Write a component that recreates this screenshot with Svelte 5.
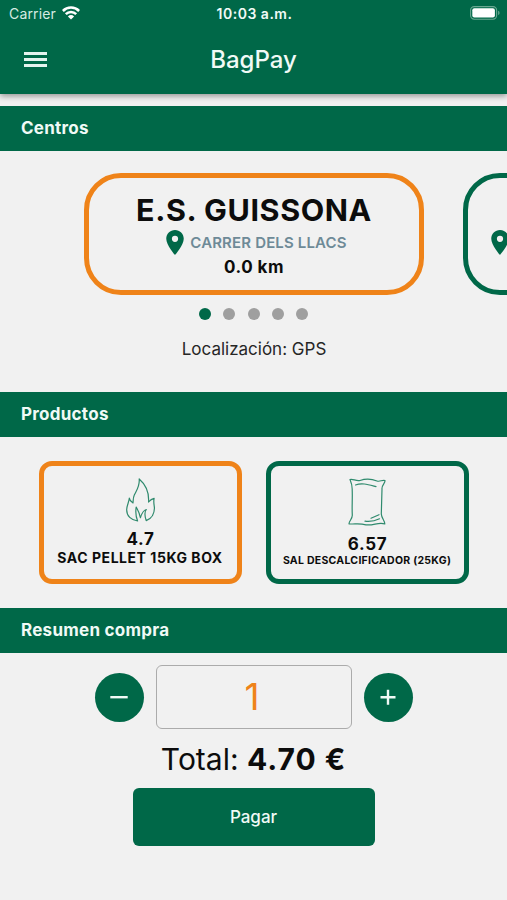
<script lang="ts">
  interface Product {
    price: string;
    name: string;
    icon: 'flame' | 'bag';
  }

  const products: Product[] = [
    { price: '4.7', name: 'SAC PELLET 15KG BOX', icon: 'flame' },
    { price: '6.57', name: 'SAL DESCALCIFICADOR (25KG)', icon: 'bag' }
  ];

  let selectedProduct = $state(0);
  let slide = $state(0);
  let quantity = $state(1);

  let total = $derived((Number(products[selectedProduct].price) * quantity).toFixed(2));
</script>

{#snippet pin()}
  <svg class="pin" viewBox="5 2 14 20" aria-hidden="true">
    <path
      d="M12 2C8.13 2 5 5.13 5 9c0 5.25 7 13 7 13s7-7.75 7-13c0-3.87-3.13-7-7-7zm0 9.5a2.5 2.5 0 1 1 0-5 2.5 2.5 0 0 1 0 5z"
    />
  </svg>
{/snippet}

<div class="app">
  <header>
    <div class="status">
      <div class="carrier">
        <span>Carrier</span>
        <svg class="wifi" viewBox="0 0 18 14" aria-hidden="true">
          <path d="M.9 5a11.4 11.4 0 0 1 16.2 0" />
          <path d="M3.8 8.1a7.3 7.3 0 0 1 10.4 0" />
          <path class="wedge" d="M5.9 10.5a4.5 4.5 0 0 1 6.2 0L9 13.6z" />
        </svg>
      </div>
      <span class="time">10:03 a.m.</span>
      <svg class="battery" viewBox="0 0 30 14" aria-hidden="true">
        <rect class="shell" x="0.6" y="0.6" width="26" height="12.6" rx="3.6" />
        <rect class="charge" x="2.3" y="2.3" width="22.6" height="9.2" rx="2" />
        <path class="tip" d="M28.1 4.7c1.9.6 1.9 3.8 0 4.4z" />
      </svg>
    </div>
    <div class="toolbar">
      <button class="menu" aria-label="Menú">
        <i></i>
        <i></i>
        <i></i>
      </button>
      <h1>BagPay</h1>
    </div>
  </header>

  <h2>Centros</h2>
  <section class="centers">
    <div class="carousel">
      <article class="center selected">
        <h3>E.S. GUISSONA</h3>
        <div class="street">
          {@render pin()}
          <span>CARRER DELS LLACS</span>
        </div>
        <p class="distance">0.0 km</p>
      </article>
      <article class="center next">
        {@render pin()}
      </article>
    </div>
    <div class="dots">
      {#each Array(5) as _, i}
        <button
          class="dot"
          class:active={slide === i}
          aria-label="Centro {i + 1}"
          onclick={() => (slide = i)}
        ></button>
      {/each}
    </div>
    <p class="location">Localización: GPS</p>
  </section>

  <h2>Productos</h2>
  <section class="products">
    {#each products as product, i}
      <button
        class="product {product.icon}"
        class:selected={selectedProduct === i}
        onclick={() => (selectedProduct = i)}
      >
        {#if product.icon === 'flame'}
          <svg class="art" viewBox="0 0 30 44" aria-hidden="true">
            <path
              d="M14.2 1C14.9 8 11.8 12 9.3 17C8.1 19.5 8.3 22 8 25C6.3 24 4.6 22.5 4.3 20.2C4 24 1.9 27 1.7 31.5C1.5 38 6.3 42.3 12.6 43C11 39 10.4 34 11.2 29C12.4 31.5 14.4 34 15.4 39.7C16.4 36.5 17.6 32.5 21.3 31.5C19.3 34 20 39 21.2 42.6C26.9 40.5 29.6 35 29.4 29.5C29.1 26.5 28.3 24 29.1 20.3C27.1 20.7 25.2 22 23.6 24C24.1 15 21.2 7 14.2 1Z"
            />
          </svg>
        {:else}
          <svg class="art" viewBox="0 0 38 48" aria-hidden="true">
            <path
              d="M2 1.5C5 .5 8 3.5 12 2.5C18 .3 23 .5 29 3C32 4.2 34 1.5 37 2.5C37.5 5 33.5 7 34 11L33.3 36C33.5 40 37 43 36.8 46C31 43.5 25 48 18 46.8C11 45 6 46.5 1 45.8C1 43 4.5 41 4.3 37C3.8 29 4.6 20 4.2 12C4.4 8 3.5 5 2 1.5Z"
            />
            <path d="M7.5 7C14 4.5 20 6.5 28 8.6M23 40.2L31 36.7M17 43.2C22 43.8 27 43 31.5 40.8" />
          </svg>
        {/if}
        <span class="price">{product.price}</span>
        <span class="name">{product.name}</span>
      </button>
    {/each}
  </section>

  <h2>Resumen compra</h2>
  <section class="summary">
    <div class="stepper">
      <button class="round" aria-label="Menos" onclick={() => (quantity = Math.max(1, quantity - 1))}>
        <svg viewBox="0 0 18 18" aria-hidden="true"><path d="M.3 9.2h17.4" /></svg>
      </button>
      <div class="quantity">{quantity}</div>
      <button class="round" aria-label="Más" onclick={() => (quantity += 1)}>
        <svg viewBox="0 0 18 18" aria-hidden="true"><path d="M1.5 9.2h15M9 1.7v15" /></svg>
      </button>
    </div>
    <p class="total">Total: <b>{total} €</b></p>
    <button class="pay">Pagar</button>
  </section>
</div>

<style>
  :global(body) {
    margin: 0;
    background: #f1f1f1;
  }

  .app {
    --green: #006848;
    --orange: #ef8319;
    width: 100%;
    height: 900px;
    overflow: hidden;
    background: #f1f1f1;
    color: #0c0c0c;
    font-family: Inter, Roboto, sans-serif;
    white-space: nowrap;
  }

  h1,
  h2,
  h3,
  p {
    margin: 0;
  }

  button {
    padding: 0;
    border: 0;
    background: none;
    color: inherit;
    font: inherit;
    letter-spacing: inherit;
  }

  header {
    height: 94px;
    margin-bottom: 12px;
    background: var(--green);
    box-shadow: 0 2px 6px rgba(0, 0, 0, 0.4);
    color: #f0faf6;
  }

  .status {
    display: grid;
    grid-template-columns: 1fr auto 1fr;
    align-items: center;
    height: 27px;
    padding: 0 7px 0 9px;
    font-size: 14px;
  }

  .carrier {
    display: flex;
    align-items: center;
    gap: 6px;
    color: #d6ebe2;
    letter-spacing: 0.15px;
  }

  .wifi {
    width: 18px;
    height: 14px;
    margin-top: -1px;
    fill: none;
    stroke: #fff;
    stroke-width: 2.5;
  }

  .wifi .wedge {
    fill: #fff;
    stroke: none;
  }

  .time {
    font-weight: 600;
    letter-spacing: 0.5px;
  }

  .battery {
    justify-self: end;
    width: 30px;
    height: 14px;
    margin-top: -1px;
  }

  .shell {
    fill: none;
    stroke: #69a891;
    stroke-width: 1.1;
  }

  .charge {
    fill: #fff;
  }

  .tip {
    fill: #69a891;
  }

  .toolbar {
    display: grid;
    grid-template-columns: 1fr auto 1fr;
    align-items: center;
    height: 65px;
    padding: 0 24px;
  }

  .menu {
    display: flex;
    flex-direction: column;
    gap: 3px;
    width: 22.5px;
  }

  .menu i {
    height: 3px;
    background: #e4f4ee;
  }

  h1 {
    font-size: 24px;
    font-weight: 500;
  }

  h2 {
    height: 45px;
    padding-left: 21px;
    background: var(--green);
    color: #f0faf6;
    font-size: 17px;
    font-weight: 700;
    letter-spacing: 0.27px;
    line-height: 45px;
  }

  .centers {
    box-sizing: border-box;
    height: 241px;
    padding-top: 22px;
  }

  .carousel {
    display: flex;
    gap: 39px;
    padding-left: 84px;
    overflow: hidden;
  }

  .center {
    display: flex;
    flex: none;
    flex-direction: column;
    align-items: center;
    box-sizing: border-box;
    width: 340px;
    height: 122px;
    padding-top: 14px;
    border: 5px solid var(--green);
    border-radius: 37px;
  }

  .center.selected {
    border-color: var(--orange);
  }

  .center.next {
    align-items: flex-start;
    padding: 52px 0 0 23px;
  }

  h3 {
    font-size: 30.5px;
    font-weight: 700;
    letter-spacing: 0.57px;
    line-height: 36px;
  }

  .pin {
    width: 18px;
    height: 25px;
    fill: var(--green);
  }

  .street {
    display: flex;
    align-items: center;
    gap: 6px;
    height: 25px;
    margin-top: 2px;
    padding-left: 5px;
    color: #6e8a97;
    font-size: 15px;
    font-weight: 600;
    letter-spacing: 0.15px;
  }

  .distance {
    margin-top: 2px;
    font-size: 17px;
    font-weight: 700;
    letter-spacing: 0.5px;
    line-height: 20px;
  }

  .dots {
    display: flex;
    justify-content: center;
    gap: 12.4px;
    margin-top: 12.5px;
  }

  .dot {
    width: 12px;
    height: 12px;
    border-radius: 50%;
    background: #9f9f9f;
  }

  .dot.active {
    background: var(--green);
  }

  .location {
    margin-top: 19.5px;
    padding-left: 1px;
    color: #262626;
    font-size: 17px;
    line-height: 20px;
    text-align: center;
  }

  .products {
    display: flex;
    justify-content: center;
    box-sizing: border-box;
    gap: 24px;
    height: 171px;
    padding-top: 24px;
  }

  .product {
    display: flex;
    flex-direction: column;
    align-items: center;
    box-sizing: border-box;
    width: 203px;
    height: 123px;
    padding-top: 12px;
    border: 5px solid var(--green);
    border-radius: 13px;
  }

  .product.selected {
    border-color: var(--orange);
  }

  .art {
    width: 30px;
    height: 44px;
    fill: none;
    stroke: #2f8a6d;
    stroke-width: 1.2;
    stroke-linejoin: round;
    stroke-linecap: round;
  }

  .bag .art {
    width: 38px;
    height: 48px;
  }

  .price {
    margin-top: 7px;
    padding-left: 1px;
    font-size: 17px;
    font-weight: 700;
    letter-spacing: 0.6px;
    line-height: 20px;
  }

  .bag .price {
    margin-top: 8px;
  }

  .name {
    font-size: 14px;
    font-weight: 700;
    letter-spacing: 0.54px;
    line-height: 18px;
  }

  .bag .name {
    font-size: 10.5px;
    letter-spacing: 0.27px;
    line-height: 14px;
  }

  .summary {
    display: flex;
    flex-direction: column;
    align-items: center;
    padding-top: 12px;
  }

  .stepper {
    display: flex;
    align-items: center;
    gap: 12px;
  }

  .round {
    display: flex;
    align-items: center;
    justify-content: center;
    width: 49px;
    height: 49px;
    border-radius: 50%;
    background: var(--green);
  }

  .round svg {
    width: 18px;
    height: 18px;
    stroke: #f0faf6;
    stroke-width: 2.4;
  }

  .quantity {
    box-sizing: border-box;
    width: 196px;
    height: 64px;
    padding-right: 3px;
    border: 1.5px solid #ababab;
    border-radius: 6px;
    color: var(--orange);
    font-size: 37px;
    line-height: 62px;
    text-align: center;
  }

  .total {
    margin-top: 10px;
    font-size: 30px;
    line-height: 40px;
  }

  .total b {
    letter-spacing: 0.95px;
  }

  .pay {
    width: 242px;
    height: 58px;
    margin-top: 9px;
    border-radius: 6px;
    background: var(--green);
    color: #f0faf6;
    font-size: 17px;
    font-weight: 500;
  }
</style>
